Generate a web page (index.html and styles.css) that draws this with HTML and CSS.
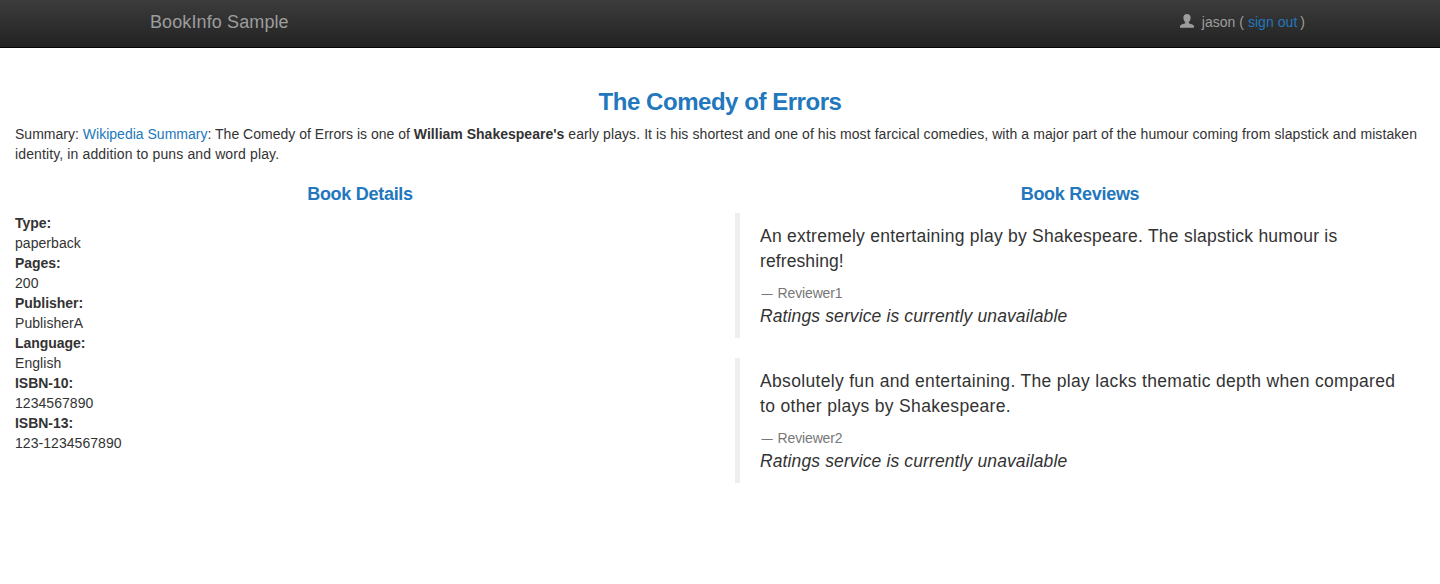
FILE: index.html
```html
<!DOCTYPE html>
<html lang="en">
<head>
<meta charset="utf-8">
<title>Simple Bookstore App</title>
<link rel="stylesheet" href="styles.css">
</head>
<body>
<nav class="navbar">
  <a class="brand">BookInfo Sample</a>
  <p class="user">
    <svg class="user-icon" viewBox="0 0 14 14" width="14" height="14"><path d="M7 0C4.700 0 3.400 1.500 3.400 3.500c0 1.900.7 3.700 1.800 4.600v.9C5.200 9.800 1.300 10.300.5 11.200 0 11.800 0 12.600 0 13.700h14c0-1.100 0-1.900-.5-2.500-.8-.9-4.700-1.400-4.700-2.200v-.9c1.100-.9 1.800-2.700 1.800-4.600C10.600 1.500 9.300 0 7 0z"/></svg>
    <span>jason (</span> <a class="link sign-out">sign out</a> <span>)</span>
  </p>
</nav>
<main class="content">
  <h3 class="title">The Comedy of Errors</h3>
  <p class="summary"><span class="line">Summary: <a class="link">Wikipedia Summary</a>: The Comedy of Errors is one of <b>William Shakespeare's</b><span class="summary-rest"> early plays. It is his shortest and one of his most farcical comedies, with a major part of the humour coming from slapstick and mistaken</span></span> <span class="line summary-end">identity, in addition to puns and word play.</span></p>
  <div class="columns">
    <section>
      <h4 class="heading">Book Details</h4>
      <dl class="details">
        <dt>Type:</dt><dd>paperback</dd>
        <dt>Pages:</dt><dd>200</dd>
        <dt>Publisher:</dt><dd>PublisherA</dd>
        <dt>Language:</dt><dd>English</dd>
        <dt>ISBN-10:</dt><dd>1234567890</dd>
        <dt>ISBN-13:</dt><dd>123-1234567890</dd>
      </dl>
    </section>
    <section>
      <h4 class="heading">Book Reviews</h4>
      <blockquote class="review">
        <p class="quote"><span class="line">An extremely entertaining play by Shakespeare. The slapstick humour is</span> <span class="line short">refreshing!</span></p>
        <small><span class="dash">—</span> Reviewer1</small>
        <i class="line rating">Ratings service is currently unavailable</i>
      </blockquote>
      <blockquote class="review">
        <p class="quote wide"><span class="line">Absolutely fun and entertaining. The play lacks thematic depth when compared</span> <span class="line">to other plays by Shakespeare.</span></p>
        <small><span class="dash">—</span> Reviewer2</small>
        <i class="line rating">Ratings service is currently unavailable</i>
      </blockquote>
    </section>
  </div>
</main>
</body>
</html>
```
FILE: styles.css
```css
* { box-sizing: border-box; }
body { margin: 0; background: #fff; color: #333; font: 14px/20px "Liberation Sans", Arial, sans-serif; }
h3, h4, p, dl, dd, blockquote { margin: 0; }
.navbar { height: 48px; padding: 0 135px 0 150px; display: flex; justify-content: space-between; background: linear-gradient(#3c3c3c, #222); border-bottom: 1px solid #080808; color: #9d9d9d; }
.brand { font-size: 18px; padding-top: 12px; letter-spacing: .11px; }
.user { display: flex; gap: 4px; padding-top: 12px; white-space: nowrap; }
.user-icon { fill: #9d9d9d; margin: 2px 4px 0 0; }
.link { color: #2277bd; }
.user .sign-out { margin-right: -1px; letter-spacing: .05px; }
.content { padding: 41px 15px 0; }
.title { text-align: center; font-size: 24px; line-height: 26px; font-weight: 700; color: #2277bd; margin-bottom: 9px; letter-spacing: -.46px; }
.line { display: block; white-space: nowrap; }
.summary { letter-spacing: .012px; }
.summary-rest { letter-spacing: .084px; }
.summary-end { letter-spacing: .125px; }
.columns { display: grid; grid-template-columns: 1fr 1fr; column-gap: 30px; padding-top: 20px; }
.heading { text-align: center; font-size: 18px; line-height: 20px; font-weight: 700; color: #2277bd; margin-bottom: 9px; letter-spacing: -.28px; }
.details dt { font-weight: 700; letter-spacing: -.04px; }
.details dd { letter-spacing: .05px; }
.review { height: 125px; margin: 0 0 20px; padding: 11px 20px 9px; border-left: 5px solid #eee; font-size: 17.5px; line-height: 25px; }
.quote { margin-bottom: 9px; letter-spacing: .25px; }
.quote.wide { letter-spacing: .325px; }
.quote .short { letter-spacing: .1px; }
.review small { display: block; height: 21px; font-size: 14px; line-height: 20px; color: #777; letter-spacing: -.15px; }
.dash { display: inline-block; transform: scaleX(.8); }
.rating { letter-spacing: .12px; }
```
